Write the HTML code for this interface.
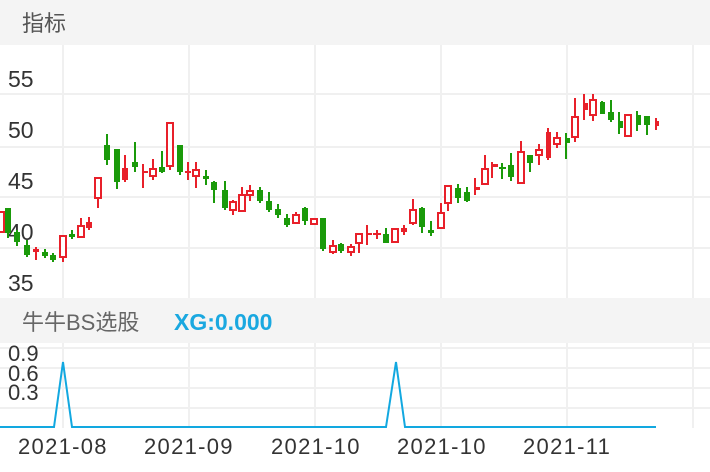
<!DOCTYPE html>
<html><head><meta charset="utf-8"><style>
html,body{margin:0;padding:0;width:710px;height:472px;overflow:hidden;background:#fff;font-family:"Liberation Sans","Noto Sans CJK SC",sans-serif}
svg{position:absolute;left:0;top:0}
.r{fill:#fff;stroke:#e8202a;stroke-width:2}
.rf{fill:#e8202a}
.g{fill:#1a9a0a}
.wr{stroke:#e8202a;stroke-width:2}
.wg{stroke:#1a9a0a;stroke-width:2}
text{font-family:"Liberation Sans","Noto Sans CJK SC",sans-serif}
</style></head><body>
<svg width="710" height="472" viewBox="0 0 710 472">
<rect x="0" y="0" width="710" height="45" fill="#f4f4f4"/>
<text x="22" y="31" font-size="22" fill="#555">指标</text>
<g stroke="#f0f0f0" stroke-width="2">
<line x1="0" x2="710" y1="94" y2="94"/><line x1="0" x2="710" y1="147" y2="147"/><line x1="0" x2="710" y1="197" y2="197"/><line x1="0" x2="710" y1="248" y2="248"/>
<line x1="63" x2="63" y1="45" y2="298"/><line x1="189" x2="189" y1="45" y2="298"/><line x1="315" x2="315" y1="45" y2="298"/><line x1="441" x2="441" y1="45" y2="298"/><line x1="567" x2="567" y1="45" y2="298"/><line x1="693" x2="693" y1="45" y2="298"/>
</g>
<g font-size="23" fill="#333">
<text x="8" y="87">55</text><text x="8" y="138">50</text><text x="8" y="189">45</text><text x="8" y="240">40</text><text x="8" y="291">35</text>
</g>
<g>
<rect class="r" x="-1" y="212" width="5" height="20"/>
<line class="wg" x1="8" x2="8" y1="208" y2="238"/><rect class="g" x="5" y="208" width="6" height="25"/>
<line class="wg" x1="17" x2="17" y1="230" y2="246"/><rect class="g" x="14" y="232" width="6" height="10"/>
<line class="wg" x1="27" x2="27" y1="240" y2="257"/><rect class="g" x="24" y="245" width="6" height="10"/>
<line class="wr" x1="36" x2="36" y1="247" y2="260"/><rect class="rf" x="33" y="249" width="6" height="3"/>
<line class="wg" x1="45" x2="45" y1="249" y2="258"/><rect class="g" x="42" y="252" width="6" height="4"/>
<line class="wg" x1="53" x2="53" y1="253" y2="262"/><rect class="g" x="50" y="255" width="6" height="5"/>
<line class="wr" x1="63" x2="63" y1="235" y2="262"/><rect class="r" x="60" y="236" width="6" height="21"/>
<line class="wg" x1="72" x2="72" y1="230" y2="239"/><rect class="g" x="69" y="234" width="6" height="3"/>
<line class="wr" x1="81" x2="81" y1="218" y2="238"/><rect class="r" x="78" y="226" width="6" height="11"/>
<line class="wr" x1="89" x2="89" y1="217" y2="230"/><rect class="rf" x="86" y="222" width="6" height="6"/>
<line class="wr" x1="98" x2="98" y1="178" y2="208"/><rect class="r" x="95" y="178" width="6" height="20"/>
<line class="wg" x1="107" x2="107" y1="134" y2="165"/><rect class="g" x="104" y="145" width="6" height="15"/>
<line class="wg" x1="117" x2="117" y1="149" y2="189"/><rect class="g" x="114" y="149" width="6" height="33"/>
<line class="wr" x1="125" x2="125" y1="155" y2="182"/><rect class="rf" x="122" y="168" width="6" height="12"/>
<line class="wg" x1="135" x2="135" y1="142" y2="172"/><rect class="g" x="132" y="162" width="6" height="5"/>
<line class="wr" x1="143" x2="143" y1="164" y2="188"/><rect class="rf" x="143" y="171" width="5" height="2"/>
<line class="wr" x1="153" x2="153" y1="159" y2="180"/><rect class="r" x="150" y="169" width="6" height="7"/>
<line class="wg" x1="162" x2="162" y1="151" y2="173"/><rect class="g" x="159" y="167" width="6" height="5"/>
<line class="wr" x1="170" x2="170" y1="122" y2="170"/><rect class="r" x="167" y="123" width="6" height="43"/>
<line class="wg" x1="180" x2="180" y1="145" y2="175"/><rect class="g" x="177" y="145" width="6" height="27"/>
<line class="wr" x1="188" x2="188" y1="162" y2="180"/><rect class="rf" x="185" y="171" width="6" height="2"/>
<line class="wr" x1="196" x2="196" y1="162" y2="188"/><rect class="r" x="193" y="170" width="6" height="6"/>
<line class="wg" x1="206" x2="206" y1="170" y2="185"/><rect class="g" x="203" y="176" width="6" height="3"/>
<line class="wg" x1="214" x2="214" y1="181" y2="203"/><rect class="g" x="211" y="182" width="6" height="8"/>
<line class="wg" x1="225" x2="225" y1="181" y2="210"/><rect class="g" x="222" y="190" width="6" height="18"/>
<line class="wr" x1="233" x2="233" y1="200" y2="215"/><rect class="r" x="230" y="202" width="6" height="8"/>
<line class="wr" x1="242" x2="242" y1="187" y2="212"/><rect class="r" x="239" y="195" width="6" height="16"/>
<line class="wr" x1="250" x2="250" y1="185" y2="201"/><rect class="r" x="247" y="191" width="6" height="4"/>
<line class="wg" x1="260" x2="260" y1="187" y2="203"/><rect class="g" x="257" y="190" width="6" height="11"/>
<line class="wg" x1="269" x2="269" y1="192" y2="212"/><rect class="g" x="266" y="201" width="6" height="9"/>
<line class="wg" x1="278" x2="278" y1="204" y2="218"/><rect class="g" x="275" y="209" width="6" height="6"/>
<line class="wg" x1="287" x2="287" y1="214" y2="227"/><rect class="g" x="284" y="218" width="6" height="7"/>
<line class="wr" x1="296" x2="296" y1="212" y2="224"/><rect class="r" x="293" y="215" width="6" height="8"/>
<line class="wg" x1="305" x2="305" y1="207" y2="225"/><rect class="g" x="302" y="208" width="6" height="13"/>
<line class="wr" x1="314" x2="314" y1="218" y2="225"/><rect class="r" x="311" y="219" width="6" height="5"/>
<line class="wg" x1="323" x2="323" y1="218" y2="251"/><rect class="g" x="320" y="218" width="6" height="31"/>
<line class="wr" x1="333" x2="333" y1="240" y2="254"/><rect class="r" x="330" y="246" width="6" height="6"/>
<line class="wg" x1="341" x2="341" y1="243" y2="253"/><rect class="g" x="338" y="244" width="6" height="7"/>
<line class="wr" x1="351" x2="351" y1="244" y2="256"/><rect class="r" x="348" y="247" width="6" height="5"/>
<line class="wr" x1="359" x2="359" y1="234" y2="253"/><rect class="r" x="356" y="234" width="6" height="9"/>
<line class="wr" x1="367" x2="367" y1="225" y2="245"/><rect class="rf" x="367" y="233" width="5" height="2"/>
<line class="wr" x1="377" x2="377" y1="230" y2="239"/><rect class="rf" x="373" y="233" width="8" height="2"/>
<line class="wg" x1="386" x2="386" y1="228" y2="243"/><rect class="g" x="383" y="234" width="6" height="9"/>
<line class="wr" x1="395" x2="395" y1="228" y2="243"/><rect class="r" x="392" y="229" width="6" height="13"/>
<line class="wr" x1="404" x2="404" y1="225" y2="235"/><rect class="rf" x="401" y="228" width="6" height="4"/>
<line class="wr" x1="413" x2="413" y1="199" y2="225"/><rect class="r" x="410" y="210" width="6" height="13"/>
<line class="wg" x1="422" x2="422" y1="207" y2="233"/><rect class="g" x="419" y="208" width="6" height="19"/>
<line class="wg" x1="431" x2="431" y1="221" y2="236"/><rect class="g" x="428" y="230" width="6" height="3"/>
<line class="wr" x1="441" x2="441" y1="203" y2="228"/><rect class="r" x="438" y="213" width="6" height="15"/>
<line class="wr" x1="448" x2="448" y1="186" y2="211"/><rect class="r" x="445" y="186" width="6" height="17"/>
<line class="wg" x1="458" x2="458" y1="184" y2="203"/><rect class="g" x="455" y="188" width="6" height="10"/>
<line class="wg" x1="467" x2="467" y1="187" y2="202"/><rect class="g" x="464" y="192" width="6" height="9"/>
<line class="wr" x1="475" x2="475" y1="178" y2="195"/><rect class="rf" x="475" y="187" width="5" height="3"/>
<line class="wr" x1="485" x2="485" y1="155" y2="185"/><rect class="r" x="482" y="169" width="6" height="15"/>
<line class="wr" x1="492" x2="492" y1="162" y2="178"/><rect class="rf" x="492" y="164" width="6" height="3"/>
<line class="wg" x1="502" x2="502" y1="163" y2="179"/><rect class="g" x="499" y="167" width="7" height="2"/>
<line class="wg" x1="511" x2="511" y1="153" y2="181"/><rect class="g" x="508" y="165" width="6" height="12"/>
<line class="wr" x1="521" x2="521" y1="141" y2="184"/><rect class="r" x="518" y="152" width="6" height="31"/>
<line class="wg" x1="530" x2="530" y1="155" y2="172"/><rect class="g" x="527" y="155" width="6" height="8"/>
<line class="wr" x1="539" x2="539" y1="144" y2="165"/><rect class="r" x="536" y="150" width="6" height="5"/>
<line class="wr" x1="548" x2="548" y1="128" y2="160"/><rect class="rf" x="546" y="132" width="5" height="26"/>
<line class="wr" x1="557" x2="557" y1="132" y2="148"/><rect class="r" x="554" y="138" width="6" height="6"/>
<line class="wg" x1="566" x2="566" y1="133" y2="159"/><rect class="g" x="566" y="138" width="4" height="5"/>
<line class="wr" x1="575" x2="575" y1="98" y2="142"/><rect class="r" x="572" y="117" width="6" height="20"/>
<line class="wr" x1="584" x2="584" y1="94" y2="120"/><rect class="rf" x="584" y="103" width="4" height="7"/>
<line class="wr" x1="593" x2="593" y1="94" y2="121"/><rect class="r" x="590" y="100" width="6" height="15"/>
<line class="wg" x1="602" x2="602" y1="101" y2="114"/><rect class="g" x="600" y="102" width="5" height="12"/>
<line class="wg" x1="611" x2="611" y1="100" y2="122"/><rect class="g" x="608" y="112" width="6" height="8"/>
<line class="wg" x1="619" x2="619" y1="112" y2="134"/><rect class="g" x="619" y="121" width="4" height="7"/>
<line class="wr" x1="628" x2="628" y1="115" y2="136"/><rect class="r" x="625" y="115" width="6" height="21"/>
<line class="wg" x1="637" x2="637" y1="111" y2="131"/><rect class="g" x="637" y="115" width="4" height="10"/>
<line class="wg" x1="647" x2="647" y1="116" y2="135"/><rect class="g" x="644" y="116" width="6" height="9"/>
<line class="wr" x1="656" x2="656" y1="118" y2="130"/><rect class="rf" x="655" y="121" width="4" height="5"/>
</g>
<rect x="0" y="298" width="710" height="45" fill="#f4f4f4"/>
<text x="22" y="330" font-size="22" fill="#666">牛牛BS选股</text>
<text x="174" y="330" font-size="23" font-weight="bold" fill="#1aa8e0">XG:0.000</text>
<g stroke="#f0f0f0" stroke-width="2">
<line x1="0" x2="710" y1="368" y2="368"/><line x1="0" x2="710" y1="388" y2="388"/><line x1="0" x2="710" y1="408" y2="408"/><line x1="0" x2="710" y1="348" y2="348"/>
<line x1="63" x2="63" y1="343" y2="428"/><line x1="189" x2="189" y1="343" y2="428"/><line x1="315" x2="315" y1="343" y2="428"/><line x1="441" x2="441" y1="343" y2="428"/><line x1="567" x2="567" y1="343" y2="428"/><line x1="693" x2="693" y1="343" y2="428"/>
</g>
<g font-size="22" fill="#333">
<text x="8" y="361">0.9</text><text x="8" y="381">0.6</text><text x="8" y="400">0.3</text>
</g>
<polyline points="0,427 54,427 63,362 72,427 386,427 396,362 405,427 656,427" fill="none" stroke="#12a8e0" stroke-width="2"/>
<g font-size="22" fill="#333" letter-spacing="1.3">
<text x="18" y="454">2021-08</text><text x="144" y="454">2021-09</text><text x="271" y="454">2021-10</text><text x="397" y="454">2021-10</text><text x="523" y="454">2021-11</text>
</g>
</svg>
</body></html>
